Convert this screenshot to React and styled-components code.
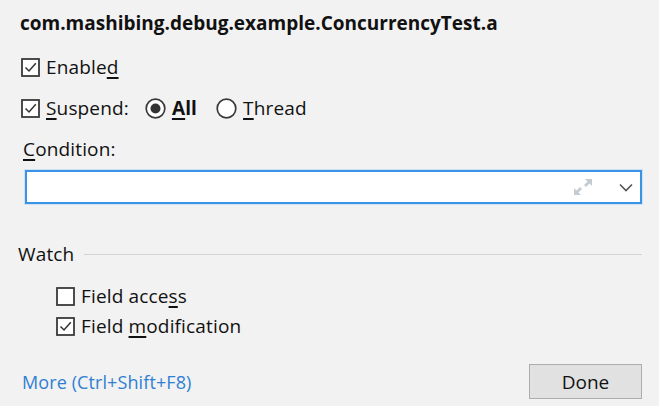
import React from "react";
import styled, { createGlobalStyle } from "styled-components";

const Global = createGlobalStyle`
  html, body { margin: 0; padding: 0; background: #f2f2f2; }
  #root { width: 659px; height: 406px; }
`;

const Dialog = styled.div`
  box-sizing: border-box;
  width: 659px;
  height: 406px;
  background: #f2f2f2;
  padding: 11px 17px 0 20px;
  font-family: "Open Sans", "Noto Sans", sans-serif;
  font-size: 19px;
  letter-spacing: 0.15px;
  color: #111;
  display: flex;
  flex-direction: column;
`;

const Title = styled.div`
  font-weight: 700;
  font-size: 19px;
  line-height: 24px;
  height: 24px;
  letter-spacing: 0;
`;

const Row = styled.div`
  display: flex;
  align-items: center;
  height: 24px;
  margin-top: ${(p) => p.$mt || 0}px;
  padding-left: ${(p) => p.$indent || 0}px;
  gap: ${(p) => p.$gap || 0}px;
`;

const Option = styled.label`
  display: flex;
  align-items: center;
  gap: 6px;
  line-height: 24px;
  margin-left: ${(p) => p.$ml || 0}px;
  font-weight: ${(p) => (p.$bold ? 700 : 400)};
`;

const Key = styled.u`
  text-decoration: underline;
  text-decoration-thickness: 1.5px;
  text-underline-offset: 3px;
`;

const Label = styled.div`
  margin-top: ${(p) => p.$mt || 0}px;
  padding-left: 3px;
  line-height: 24px;
  height: 24px;
`;

const Field = styled.div`
  box-sizing: border-box;
  margin-top: 9px;
  margin-left: 5px;
  height: 34px;
  border: 2px solid #3d93e3;
  box-shadow: 0 0 0 1px #cfe3f6;
  background: #fff;
  display: flex;
  align-items: center;
  justify-content: flex-end;
  padding-right: 7px;
  gap: 26px;
`;

const Section = styled.div`
  display: flex;
  align-items: center;
  gap: 10px;
  margin-top: 38px;
  margin-left: -2px;
  height: 24px;
`;

const Rule = styled.div`
  flex: 1;
  height: 1px;
  background: #d3d3d3;
`;

const Footer = styled.div`
  display: flex;
  align-items: center;
  justify-content: space-between;
  margin-top: 26px;
  padding-left: 2px;
`;

const Link = styled.a`
  color: #2f7fd3;
  text-decoration: none;
  font-size: 18px;
  letter-spacing: 0.1px;
  line-height: 24px;
`;

const Button = styled.button`
  box-sizing: border-box;
  width: 113px;
  height: 35px;
  background: #e1e1e1;
  border: 1.5px solid #adadad;
  font-family: inherit;
  font-size: 19px;
  color: #111;
  padding: 0;
`;

const Check = ({ on }) => (
  <svg width="19" height="19" viewBox="0 0 19 19">
    <rect x="1" y="1" width="17" height="17" fill="#fff" stroke="#3a3a3a" strokeWidth="1.8" />
    {on && <path d="M4.5 9.5 L8 13 L14.8 5.2" fill="none" stroke="#333" strokeWidth="1.5" />}
  </svg>
);

const Radio = ({ on }) => (
  <svg width="21" height="21" viewBox="0 0 21 21">
    <circle cx="10.5" cy="10.5" r="9.3" fill="#fff" stroke="#3a3a3a" strokeWidth="1.7" />
    {on && <circle cx="10.5" cy="10.5" r="5" fill="#333" />}
  </svg>
);

const Expand = () => (
  <svg width="20" height="20" viewBox="0 0 20 20" fill="#c3ccd3">
    <path d="M12 2 H19 V9 L16.5 6.5 L13 10 L11 8 L14.5 4.5 Z" />
    <path d="M8 18 H1 V11 L3.5 13.5 L7 10 L9 12 L5.5 15.5 Z" />
  </svg>
);

const Chevron = () => (
  <svg width="14" height="9" viewBox="0 0 14 9">
    <path d="M1 1.5 L7 7.5 L13 1.5" fill="none" stroke="#555" strokeWidth="1.6" />
  </svg>
);

export default function App() {
  return (
    <>
      <Global />
      <Dialog>
        <Title>com.mashibing.debug.example.ConcurrencyTest.a</Title>
        <Row $mt={20} $indent={1}>
          <Option>
            <Check on />
            <span>
              Enable<Key>d</Key>
            </span>
          </Option>
        </Row>
        <Row $mt={17} $indent={1} $gap={16}>
          <Option>
            <Check on />
            <span>
              <Key>S</Key>uspend:
            </span>
          </Option>
          <Option $bold>
            <Radio on />
            <span>
              <Key>A</Key>ll
            </span>
          </Option>
          <Option $ml={3}>
            <Radio />
            <span>
              <Key>T</Key>hread
            </span>
          </Option>
        </Row>
        <Label $mt={17}>
          <Key>C</Key>ondition:
        </Label>
        <Field>
          <Expand />
          <Chevron />
        </Field>
        <Section>
          <span>Watch</span>
          <Rule />
        </Section>
        <Row $mt={18} $indent={36}>
          <Option>
            <Check />
            <span>
              Field acce<Key>s</Key>s
            </span>
          </Option>
        </Row>
        <Row $mt={6} $indent={36}>
          <Option>
            <Check on />
            <span>
              Field <Key>m</Key>odification
            </span>
          </Option>
        </Row>
        <Footer>
          <Link href="#">More (Ctrl+Shift+F8)</Link>
          <Button>Done</Button>
        </Footer>
      </Dialog>
    </>
  );
}
